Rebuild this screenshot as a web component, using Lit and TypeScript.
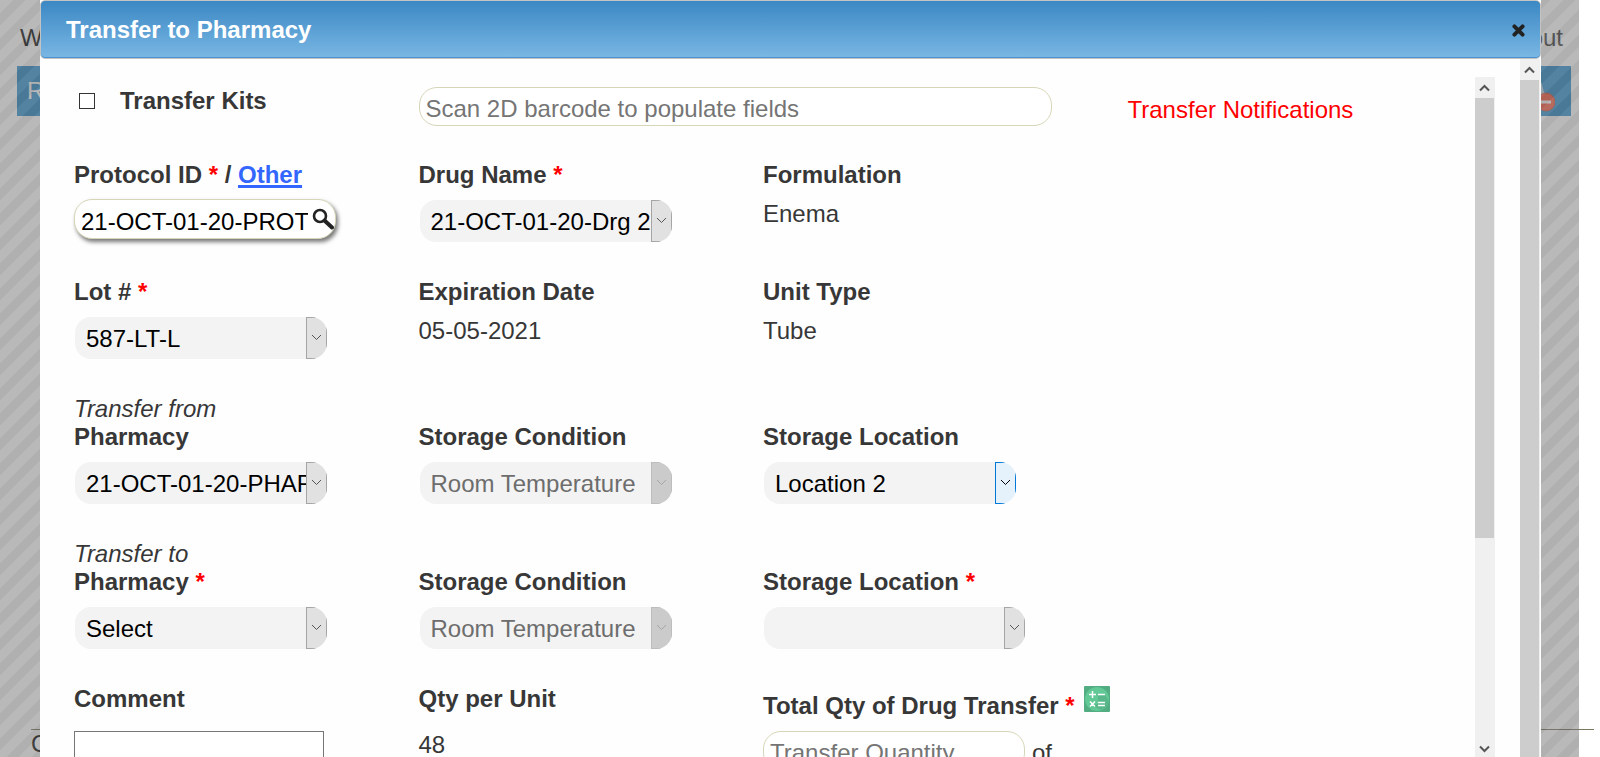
import { LitElement, html, css, svg } from "lit";
import { customElement, property } from "lit/decorators.js";
import { classMap } from "lit/directives/class-map.js";

/** Drop-down with a rounded body and a boxed arrow at its right end. */
@customElement("pill-select")
class PillSelect extends LitElement {
  @property() label = "";
  @property() value = "";
  @property({ type: Boolean }) disabled = false;
  @property({ type: Boolean }) active = false;
  @property({ type: Boolean }) wide = false;

  static styles = css`
    :host {
      display: block;
      padding-left: 1px;
    }
    .wrap {
      position: relative;
      width: 252px;
      height: 42px;
      border-radius: 16px;
      overflow: hidden;
      background: #f3f3f3;
    }
    .wide {
      width: 261px;
    }
    .control {
      appearance: none;
      display: block;
      box-sizing: border-box;
      width: 100%;
      height: 42px;
      margin: 0;
      padding: 2px 21px 0 11px;
      border: 0;
      outline: 0;
      background: transparent;
      color: #000;
      font: 24px/28px "Liberation Sans", Arial, sans-serif;
    }
    .control:disabled {
      color: #6d6d6d;
      opacity: 1;
    }
    .arrow {
      position: absolute;
      top: 0;
      right: 0;
      bottom: 0;
      box-sizing: border-box;
      width: 21px;
      border: 1px solid #a5a5a5;
      background: #e1e1e1;
      color: #555;
      pointer-events: none;
      display: grid;
      place-items: center;
    }
    .arrow.off {
      border-color: #bdbdbd;
      background: #cbcbcb;
      color: #a6a6a6;
    }
    .arrow.hot {
      border-color: #0078d7;
      background: #e5f1fb;
      color: #000;
    }
  `;

  render() {
    return html`<div class=${classMap({ wrap: true, wide: this.wide })}>
      <select class="control" aria-label=${this.label} ?disabled=${this.disabled}>
        <option>${this.value}</option>
      </select>
      <span class=${classMap({ arrow: true, off: this.disabled, hot: this.active })}>
        <svg width="11" height="8" viewBox="0 0 11 8" fill="none" stroke="currentColor" stroke-width="1">
          <path d="M1 1L5.500 5.500L10 1" />
        </svg>
      </span>
    </div>`;
  }
}

/** Flat scroll bar with arrow buttons. */
@customElement("scroll-track")
class ScrollTrack extends LitElement {
  @property({ type: Boolean }) full = false;

  static styles = css`
    :host {
      display: flex;
      flex-direction: column;
      flex: none;
      width: 20px;
      background: #f0f0f0;
    }
    .end {
      display: grid;
      place-items: center;
      flex: none;
      width: 19px;
      height: 21px;
    }
    .thumb {
      width: 19px;
      flex: 440 1 0;
      background: #cdcdcd;
    }
    .rest {
      flex: 200 1 0;
    }
  `;

  render() {
    const arrow = (d: string) => html`<span class="end">
      <svg width="11" height="8" viewBox="0 0 11 8" fill="none" stroke="#555" stroke-width="2">
        ${svg`<path d=${d} />`}
      </svg>
    </span>`;
    return html`${arrow("M1 6.500L5.500 2L10 6.500")}
      <div class="thumb"></div>
      ${this.full ? "" : html`<div class="rest"></div>${arrow("M1 1.500L5.500 6L10 1.500")}`}`;
  }
}

@customElement("app-root")
class AppRoot extends LitElement {
  static styles = css`
    :host {
      display: block;
      position: relative;
      height: 100vh;
      overflow: hidden;
      background: #fff;
      color: #373737;
      font: 24px/28px "Liberation Sans", Arial, sans-serif;
    }
    .page {
      display: flex;
      flex-direction: column;
      height: 100%;
    }
    .top {
      display: flex;
      justify-content: space-between;
      padding: 24px 37px 14px 20px;
      color: #0c0c0c;
    }
    .out {
      color: #444;
    }
    .nav {
      display: flex;
      align-items: center;
      justify-content: space-between;
      height: 50px;
      margin: 0 29px 0 17px;
      padding: 0 16px 0 10px;
      background: #3490cf;
      color: #fff;
    }
    .nav svg {
      margin-top: 10px;
    }
    .foot {
      margin: auto 6px 0 31px;
      border-top: 1px solid #7c775f;
      color: #0c0c0c;
      line-height: 27px;
    }
    .overlay {
      position: absolute;
      inset: 0 21px 0 0;
      background: linear-gradient(
          135deg,
          #737373 25%,
          #616161 25%,
          #616161 50%,
          #737373 50%,
          #737373 75%,
          #616161 75%
        )
        1px 0 / 25px 25px;
      opacity: 0.5;
    }
    .dialog {
      position: absolute;
      inset: 0 59px 0 40px;
      display: flex;
      flex-direction: column;
      background: #fefefe;
    }
    .bar {
      display: flex;
      align-items: center;
      justify-content: space-between;
      box-sizing: border-box;
      height: 59px;
      flex: none;
      padding: 0 15px 0 25px;
      border: 1px solid #c3c3c3;
      border-radius: 5px;
      box-shadow: inset 0 -1px #4a92cf;
      background: linear-gradient(#3b88c4, #7ab7e4);
      color: #fff;
    }
    .title {
      margin: 0;
      font-size: 24px;
      line-height: 28px;
    }
    .close {
      display: grid;
      padding: 2px 0 0;
      border: 0;
      background: none;
    }
    .content {
      display: flex;
      flex: 1;
      min-height: 0;
      padding-right: 1px;
    }
    .form {
      flex: 1;
      min-width: 0;
      overflow: hidden;
      display: flex;
      flex-direction: column;
      gap: 36px;
      padding: 28px 0 0 34px;
    }
    .inner {
      margin: 18px 25px -2px 0;
    }
    .row {
      display: grid;
      flex: none;
      align-items: start;
      grid-template-columns: repeat(3, minmax(0, 689fr)) minmax(0, 735fr);
    }
    .scan-row {
      margin-bottom: -1px;
    }
    .kits {
      display: flex;
      align-items: center;
      gap: 25px;
      padding-left: 5px;
      font-weight: bold;
    }
    .tick {
      appearance: none;
      box-sizing: border-box;
      width: 16px;
      height: 16px;
      margin: 0;
      border: 1px solid #333;
      background: #fff;
    }
    .span {
      grid-column: span 2;
    }
    .text {
      box-sizing: border-box;
      height: 40px;
      margin: 0;
      padding: 4px 6px 0;
      border: 1px solid #d6d6b8;
      border-radius: 18px;
      outline: 0;
      background: #fff;
      color: #000;
      font: 24px/28px "Liberation Sans", Arial, sans-serif;
    }
    .text::placeholder {
      color: #757575;
      opacity: 1;
    }
    .scan {
      display: block;
      width: 92%;
      height: 39px;
    }
    .note {
      padding: 9px 0 0 20px;
      color: #f00;
      white-space: nowrap;
    }
    .field {
      display: flex;
      flex-direction: column;
      align-items: flex-start;
      gap: 11px;
    }
    .bottom {
      align-self: end;
    }
    .label {
      font-weight: bold;
    }
    .hint {
      display: block;
      font-style: italic;
      font-weight: normal;
    }
    .req {
      color: #f00;
    }
    .link {
      color: #36f;
      text-decoration: underline;
      text-decoration-thickness: 3px;
      text-underline-offset: 2px;
    }
    .tight {
      gap: 10px;
    }
    .search {
      position: relative;
      display: flex;
    }
    .search .text {
      width: 262px;
      padding-top: 5px;
      padding-right: 27px;
      box-shadow: 2px 3px 4px #777;
    }
    .search svg {
      position: absolute;
      right: 2px;
      top: 9px;
    }
    .loose {
      gap: 18px;
    }
    .area {
      box-sizing: border-box;
      width: 250px;
      height: 80px;
      margin: 0;
      border: 1px solid #767676;
      background: #fff;
      resize: none;
    }
    .calc-line {
      display: flex;
      align-items: flex-end;
      gap: 9px;
      height: 35px;
      white-space: nowrap;
    }
    .calc {
      display: block;
      padding: 0 0 8px;
      border: 0;
      background: none;
    }
    .calc svg,
    .close svg {
      display: block;
    }
    .qty {
      display: flex;
      align-items: center;
      gap: 7px;
    }
    .qty .text {
      width: 262px;
    }
    .qty span {
      padding-top: 4px;
    }
  `;

  label(text: string, required = false, hint = "") {
    return html`<span class="label"
      >${hint ? html`<span class="hint">${hint}</span>` : ""}${text}${required
        ? html` <span class="req">*</span>`
        : ""}</span
    >`;
  }

  pick(text: string, value: string, o: any = {}) {
    return html`<div class="field bottom">
      ${this.label(text, o.required, o.hint)}
      <pill-select
        .label=${text}
        .value=${value}
        .disabled=${!!o.disabled}
        .active=${!!o.active}
        .wide=${!!o.wide}
      ></pill-select>
    </div>`;
  }

  fact(text: string, value: string) {
    return html`<div class="field">${this.label(text)}<span>${value}</span></div>`;
  }

  render() {
    return html`
      <div class="page">
        <div class="top"><span>W</span><span class="out">out</span></div>
        <div class="nav">
          <span>R</span>
          <svg width="34" height="40" viewBox="0 0 34 40">
            <path d="M6 34L15 2h4l9 32z" fill="#b9cfe0" />
            <circle cx="25" cy="26" r="9" fill="#ff6048" stroke="#c85540" />
            <rect x="20" y="24.500" width="10" height="3" fill="#fff" />
          </svg>
        </div>
        <div class="foot">C</div>
      </div>
      <div class="overlay"></div>
      <div class="dialog" role="dialog" aria-labelledby="title">
        <div class="bar">
          <h1 class="title" id="title">Transfer to Pharmacy</h1>
          <button class="close" aria-label="Close">
            <svg width="13" height="13" viewBox="0 0 12 12" stroke="#222" stroke-width="3.600" stroke-linecap="round">
              <path d="M2.200 2.200L9.800 9.800M9.800 2.200L2.200 9.800" />
            </svg>
          </button>
        </div>
        <div class="content">
          <form class="form">
            <div class="row scan-row">
              <label class="kits"><input class="tick" type="checkbox" />Transfer Kits</label>
              <div class="span">
                <input class="text scan" placeholder="Scan 2D barcode to populate fields" aria-label="Barcode" />
              </div>
              <div class="note">Transfer Notifications</div>
            </div>
            <div class="row">
              <div class="field tight">
                <span class="label"
                  ><label for="protocol">Protocol ID</label> <span class="req">*</span> /
                  <a class="link" href="#">Other</a></span
                >
                <div class="search">
                  <input class="text" id="protocol" .value=${"21-OCT-01-20-PROT"} />
                  <svg width="22" height="22" viewBox="0 0 22 22" fill="none" stroke="#222">
                    <circle cx="8" cy="8" r="6" stroke-width="2.600" />
                    <path d="M12.500 12.500L20 19.500" stroke-width="4" stroke-linecap="round" />
                  </svg>
                </div>
              </div>
              ${this.pick("Drug Name", "21-OCT-01-20-Drg 2", { required: true })}
              ${this.fact("Formulation", "Enema")}
            </div>
            <div class="row">
              ${this.pick("Lot #", "587-LT-L", { required: true })}
              ${this.fact("Expiration Date", "05-05-2021")} ${this.fact("Unit Type", "Tube")}
            </div>
            <div class="row">
              ${this.pick("Pharmacy", "21-OCT-01-20-PHARM", { hint: "Transfer from" })}
              ${this.pick("Storage Condition", "Room Temperature", { disabled: true })}
              ${this.pick("Storage Location", "Location 2", { active: true })}
            </div>
            <div class="row">
              ${this.pick("Pharmacy", "Select", { hint: "Transfer to", required: true })}
              ${this.pick("Storage Condition", "Room Temperature", { disabled: true })}
              ${this.pick("Storage Location", "", { required: true, wide: true })}
            </div>
            <div class="row">
              <div class="field loose">
                <label class="label" for="comment">Comment</label>
                <textarea class="area" id="comment"></textarea>
              </div>
              <div class="field loose">${this.label("Qty per Unit")}<span>48</span></div>
              <div class="field">
                <div class="calc-line">
                  <label class="label" for="qty">Total Qty of Drug Transfer <span class="req">*</span></label>
                  <button class="calc" type="button" aria-label="Calculate">
                    <svg width="26" height="26" viewBox="0 0 26 26">
                      <rect width="26" height="26" rx="1" fill="#52ad82" />
                      <circle cx="13" cy="13" r="12" fill="#62c896" />
                      <path d="M14 9L21 9L25 15A12 12 0 0 1 17 24L7 19L14 18z" fill="#58b88a" />
                      <path
                        d="M5 8.500h7M8.500 5v7M14 8.500h7M6 15.500l5 5M11 15.500l-5 5M14 16.500h7M14 19.500h7"
                        stroke="#fff"
                        stroke-width="1.500"
                      />
                    </svg>
                  </button>
                </div>
                <div class="qty">
                  <input class="text" id="qty" placeholder="Transfer Quantity" /><span>of</span>
                </div>
              </div>
            </div>
          </form>
          <scroll-track class="inner"></scroll-track>
          <scroll-track .full=${true}></scroll-track>
        </div>
      </div>
    `;
  }
}
